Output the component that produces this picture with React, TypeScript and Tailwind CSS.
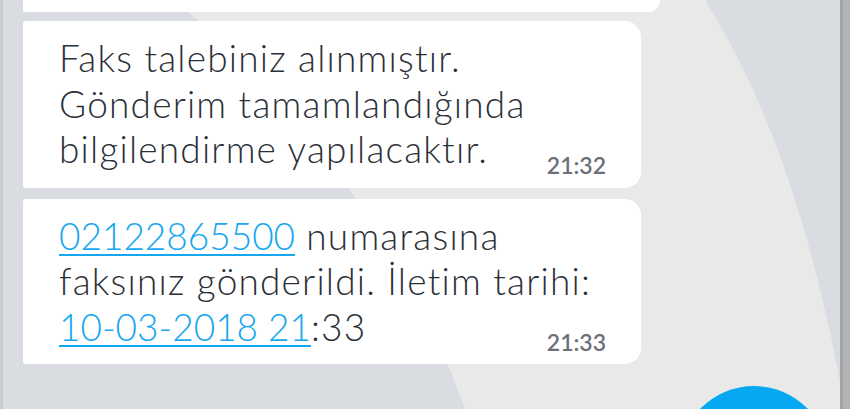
import React from 'react'

function Time({ children }: { children: React.ReactNode }) {
  return (
    <div className="flex justify-end mt-[-19px]">
      <span className="text-[23px] leading-[24px] font-semibold text-[#6b7079]">{children}</span>
    </div>
  )
}

function Link({ children }: { children: React.ReactNode }) {
  return (
    <span className="text-[#16a7ef] tracking-[0px] underline decoration-[2px] underline-offset-[4px]">{children}</span>
  )
}

function Bubble({ children, time, className }: { children: React.ReactNode; time: string; className: string }) {
  return (
    <div className={`w-[618px] bg-white rounded-l-[3px] rounded-r-[16px] pl-[36px] pr-[35px] pt-[14px] ${className}`}>
      <p className="whitespace-nowrap text-[37px] leading-[45.5px] tracking-[1.2px] font-light text-[#2b3038]">
        {children}
      </p>
      <Time>{time}</Time>
    </div>
  )
}

export default function App() {
  return (
    <div className="relative w-[850px] h-[409px] overflow-hidden bg-[#d9dce0] font-['Lato',sans-serif]">
      <svg className="absolute inset-0" width="850" height="409" viewBox="0 0 850 409">
        <path d="M175,0 L705,0 Q800,150 845,409 L465,409 Q384,181 175,0 Z" fill="#e9e9e9" />
      </svg>

      <div className="relative flex h-full">
        <div className="w-[3px] bg-[#c8cacd]" />

        <div className="flex-1 pl-[20px] flex flex-col">
          <div className="w-[637px] h-[12px] shrink-0 bg-white rounded-br-[16px] rounded-bl-[3px]" />

          <Bubble time="21:32" className="mt-[9px] pb-[11px]">
            Faks talebiniz alınmıştır.
            <br />
            Gönderim tamamlandığında
            <br />
            bilgilendirme yapılacaktır.
          </Bubble>

          <Bubble time="21:33" className="mt-[11px] pb-[10px]">
            <Link>02122865500</Link> numarasına
            <br />
            faksınız gönderildi. İletim tarihi:
            <br />
            <Link>10-03-2018 21</Link>:33
          </Bubble>
        </div>

        <div className="w-[3px] bg-[#a2a3a5]" />
        <div className="w-[7px] bg-[#b2b3b5]" />
      </div>

      <div className="absolute left-[679px] top-[386px] w-[150px] h-[150px] rounded-full bg-[#06a9f1]" />
    </div>
  )
}
